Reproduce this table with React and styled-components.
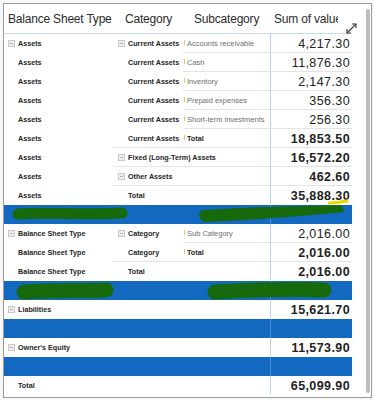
import React from "react";
import styled, { createGlobalStyle } from "styled-components";

const GlobalStyle = createGlobalStyle`
  html, body {
    margin: 0;
    padding: 0;
    background: #f8f8f8;
  }
  body {
    font-family: "Liberation Sans", Arial, sans-serif;
  }
`;

const COLS = "109px 70px 87px 82px";
const BLUE = "#1368c0";
const GREEN = "#166a0c";

const rows = [
  { a: "Assets", ai: true, b: "Current Assets", bi: true, c: "Accounts receivable", v: "4,217.30", rule: "sub", mark: true },
  { a: "Assets", b: "Current Assets", c: "Cash", v: "11,876.30", rule: "sub", mark: true },
  { a: "Assets", b: "Current Assets", c: "Inventory", v: "2,147.30", rule: "sub", mark: true },
  { a: "Assets", b: "Current Assets", c: "Prepaid expenses", v: "356.30", rule: "sub", mark: true },
  { a: "Assets", b: "Current Assets", c: "Short-term investments", v: "256.30", rule: "sub", mark: true },
  { a: "Assets", b: "Current Assets", c: "Total", cb: true, v: "18,853.50", vb: true, rule: "cat", mark: true },
  { a: "Assets", b: "Fixed (Long-Term) Assets", bi: true, v: "16,572.20", vb: true, rule: "cat" },
  { a: "Assets", b: "Other Assets", bi: true, v: "462.60", vb: true, rule: "cat" },
  { a: "Assets", b: "Total", v: "35,888.30", vb: true },
  { band: 1 },
  { a: "Balance Sheet Type", ai: true, b: "Category", bi: true, c: "Sub Category", v: "2,016.00", rule: "sub", mark: true },
  { a: "Balance Sheet Type", b: "Category", c: "Total", cb: true, v: "2,016.00", vb: true, rule: "cat", mark: true },
  { a: "Balance Sheet Type", b: "Total", v: "2,016.00", vb: true },
  { band: 2 },
  { a: "Liabilities", ai: true, v: "15,621.70", vb: true },
  { band: 3 },
  { a: "Owner's Equity", ai: true, v: "11,573.90", vb: true },
  { band: 4 },
  { a: "Total", v: "65,099.90", vb: true },
];

const Scribble = ({ kind }) => {
  if (kind === 1) {
    return (
      <Overlay width="348" height="19" viewBox="0 0 348 19">
        <path d="M14 9 C 45 7, 85 10, 118 8" stroke={GREEN} strokeWidth="11" strokeLinecap="round" fill="none" />
        <path d="M198 5 C 250 2, 300 1, 338 0 L 340 7 C 300 11, 250 15, 200 17 Q 191 11 198 5 Z" fill={GREEN} />
        <path d="M325 -2 C 332 -2, 338 -3, 343 -4" stroke="#f2d600" strokeWidth="3" strokeLinecap="round" fill="none" />
      </Overlay>
    );
  }
  if (kind === 2) {
    return (
      <Overlay width="348" height="19" viewBox="0 0 348 19">
        <path d="M20 11 C 50 9, 80 10, 102 9" stroke={GREEN} strokeWidth="15" strokeLinecap="round" fill="none" />
        <path d="M211 11 C 250 9, 290 8, 320 9" stroke={GREEN} strokeWidth="15" strokeLinecap="round" fill="none" />
      </Overlay>
    );
  }
  return null;
};

const ExpandIcon = () => (
  <ExpandSvg width="13" height="13" viewBox="0 0 13 13">
    <path d="M2 11 L11 2" stroke="#3a3a3a" strokeWidth="1.1" fill="none" />
    <path d="M7 2 L11 2 L11 6" stroke="#3a3a3a" strokeWidth="1.1" fill="none" />
    <path d="M2 7 L2 11 L6 11" stroke="#3a3a3a" strokeWidth="1.1" fill="none" />
  </ExpandSvg>
);

const App = () => {
  return (
    <Page>
      <GlobalStyle />
      <Frame>
        <Table>
          <Header>
            <HeaderCell $pad={4}>Balance Sheet Type</HeaderCell>
            <HeaderCell $pad={12}>Category</HeaderCell>
            <HeaderCell $pad={11}>Subcategory</HeaderCell>
            <HeaderCell $pad={4} $width={68}>Sum of value</HeaderCell>
          </Header>
          {rows.map((r, i) =>
            r.band ? (
              <Row key={i} $band>
                <span />
                <span />
                <span />
                <BandValue />
                <Scribble kind={r.band} />
              </Row>
            ) : (
              <Row key={i}>
                <NameCell $pad={r.ai ? 4 : 14}>
                  {r.ai && <Toggle />}
                  {r.a}
                </NameCell>
                <CatCell $pad={r.b ? (r.bi ? 5 : 15) : 0} $rule={r.rule === "cat"}>
                  {r.bi && <Toggle />}
                  {r.b}
                </CatCell>
                <SubCell $bold={r.cb} $mark={r.mark} $rule={!!r.rule}>
                  {r.c}
                </SubCell>
                <ValueCell $bold={r.vb} $rule={!!r.rule}>
                  {r.v}
                </ValueCell>
              </Row>
            )
          )}
        </Table>
        <ScrollThumb />
        <ExpandIcon />
      </Frame>
    </Page>
  );
};

export default App;

const Page = styled.div`
  width: 374px;
  height: 400px;
  box-sizing: border-box;
  padding: 3px 2px 2px 3px;
`;

const Frame = styled.div`
  position: relative;
  box-sizing: border-box;
  width: 369px;
  height: 395px;
  border: 1px solid #9a9a9a;
  background: #ffffff;
  display: flex;
  overflow: hidden;
`;

const Table = styled.div`
  width: 348px;
  display: flex;
  flex-direction: column;
`;

const Header = styled.div`
  display: grid;
  grid-template-columns: ${COLS};
  height: 30px;
  box-sizing: border-box;
  border-bottom: 1px solid #c5dbf0;
`;

const HeaderCell = styled.div`
  box-sizing: border-box;
  display: flex;
  align-items: center;
  width: ${p => (p.$width ? `${p.$width}px` : "auto")};
  padding-left: ${p => p.$pad}px;
  overflow: hidden;
  white-space: nowrap;
  font-size: 12px;
  letter-spacing: -0.2px;
  color: #2b2b2b;
`;

const Row = styled.div`
  position: relative;
  display: grid;
  grid-template-columns: ${COLS};
  height: 19px;
  background: ${p => (p.$band ? BLUE : "transparent")};
`;

const BaseCell = styled.div`
  position: relative;
  box-sizing: border-box;
  height: 19px;
  display: flex;
  align-items: center;
  white-space: nowrap;
  border-bottom: 1px solid ${p => (p.$rule ? "#e3e3e3" : "transparent")};
`;

const NameCell = styled(BaseCell)`
  padding-left: ${p => p.$pad}px;
  font-size: 7.2px;
  font-weight: 700;
  color: #262626;
`;

const CatCell = styled(BaseCell)`
  padding-left: ${p => p.$pad}px;
  font-size: 7.2px;
  font-weight: 700;
  color: #262626;
  overflow: visible;
  z-index: 1;
`;

const SubCell = styled(BaseCell)`
  padding-left: 4px;
  font-size: ${p => (p.$bold ? "7.2px" : "7.5px")};
  font-weight: ${p => (p.$bold ? 700 : 400)};
  color: ${p => (p.$bold ? "#262626" : "#6e6e6e")};

  &::before {
    content: "";
    display: ${p => (p.$mark ? "block" : "none")};
    position: absolute;
    left: 1px;
    top: 6px;
    width: 1px;
    height: 5px;
    background: #e6c36a;
  }
`;

const ValueCell = styled(BaseCell)`
  justify-content: flex-end;
  padding-right: 2px;
  padding-top: 2px;
  border-left: 1px solid #b8d2ee;
  font-size: 12.5px;
  letter-spacing: 0.4px;
  font-weight: ${p => (p.$bold ? 700 : 400)};
  color: #222222;
`;

const BandValue = styled.div`
  border-left: 1px solid #4a8fd3;
`;

const Toggle = styled.span`
  box-sizing: border-box;
  width: 7px;
  height: 7px;
  margin-right: 3px;
  border: 1px solid #c9c9c9;
  background: #ededed;
  position: relative;
  flex: none;

  &::after {
    content: "";
    position: absolute;
    left: 1px;
    right: 1px;
    top: 2px;
    height: 1px;
    background: #b5b5b5;
  }
`;

const Overlay = styled.svg`
  position: absolute;
  left: 0;
  top: 0;
  overflow: visible;
  pointer-events: none;
`;

const ScrollThumb = styled.div`
  width: 4px;
  margin: 5px 1px 4px auto;
  border-radius: 2px;
  background: #bdbdbd;
`;

const ExpandSvg = styled.svg`
  position: absolute;
  left: 341px;
  top: 18px;
`;
